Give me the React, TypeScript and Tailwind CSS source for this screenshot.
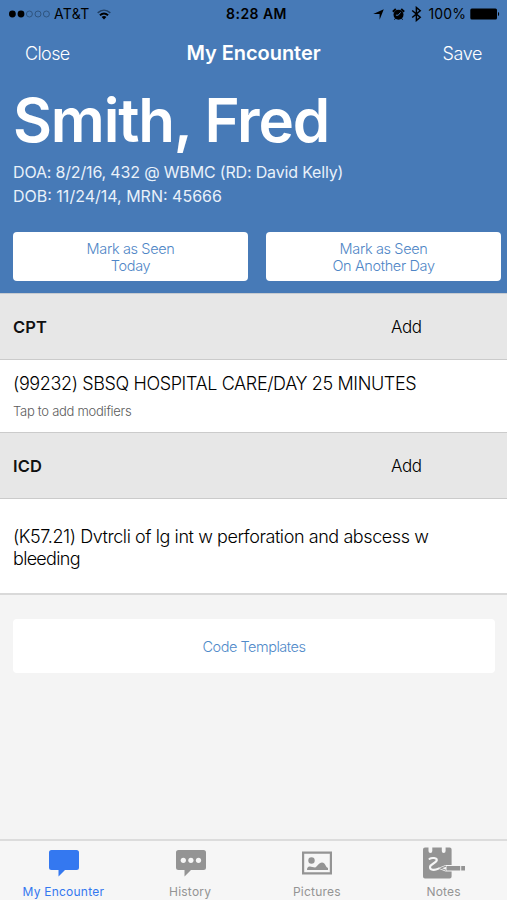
import type { ReactNode } from 'react';

const sf = "font-['Inter','Liberation_Sans',sans-serif]";
const light = "font-['Inter','Liberation_Sans',sans-serif] font-light";

function StatusBar() {
  return (
    <div className="flex h-7 items-center text-black">
      <div className="flex flex-1 items-center pl-[9px]">
        <svg width="42" height="8" viewBox="0 0 42 8" className="shrink-0">
          <circle cx="3.4" cy="4" r="3.4" />
          <circle cx="12" cy="4" r="3.4" />
          <g fill="none" stroke="#294b72" strokeWidth="0.8">
            <circle cx="20.4" cy="4" r="3" />
            <circle cx="29" cy="4" r="3" />
            <circle cx="37.4" cy="4" r="3" />
          </g>
        </svg>
        <span className="ml-[3px] text-sm tracking-[0.3px]">AT&amp;T</span>
        <svg width="14" height="11" viewBox="0 0 14 11" className="ml-[7px]">
          <path d="M.7 3.900C4.500.5 9.500.5 13.300 3.900" fill="none" stroke="#203f63" strokeWidth="1.500" />
          <path d="M2.900 6.200C5.400 4 8.600 4 11.100 6.200" fill="none" stroke="#000" strokeWidth="1.900" />
          <path d="M4.600 8C6 6.700 8 6.700 9.400 8L7 10.600z" />
        </svg>
      </div>
      <span className="pl-[4px] text-sm font-semibold tracking-[0.45px]">8:28 AM</span>
      <div className="flex flex-1 items-center justify-end pr-[7px]">
        <svg width="11" height="11" viewBox="0 0 10 10">
          <path d="M9.800.2L6 9.800V4.600H.200z" />
        </svg>
        <svg width="13" height="13" viewBox="0 0 13 13" className="ml-[8px]">
          <path d="M.8 3.700L3.800 1M9.200 1L12.200 3.700" stroke="#000" strokeWidth="1.900" />
          <path d="M3.200 10.500L2.500 11.700M9.800 10.500L10.500 11.700" stroke="#000" strokeWidth="1" />
          <circle cx="6.500" cy="6.800" r="5" />
          <path d="M6.200 7.200L8.600 4.400M3.900 7.200H6.300" stroke="#477ab7" strokeWidth="1" />
        </svg>
        <svg width="11" height="16" viewBox="0 0 11 16" className="ml-[6px]">
          <path d="M1.200 4.500L9.200 11.300L5.400 14.500V1.500L9.200 4.700L1.200 11.500" fill="none" stroke="#000" strokeWidth="1.500" />
        </svg>
        <span className="ml-[7px] text-sm tracking-[0.1px]">100%</span>
        <svg width="30" height="12" viewBox="0 0 30 12" className="ml-[4px]">
          <rect x=".3" y=".5" width="26.700" height="11" rx="1.500" />
          <path d="M28 4c1.500.3 1.500 3.700 0 4z" />
        </svg>
      </div>
    </div>
  );
}

function SeenButton({ children }: { children: ReactNode }) {
  return (
    <button className={`${light} h-[49px] w-[235px] rounded-[4px] bg-white pt-px text-[14.5px] leading-[17.500px] tracking-[-0.36px] text-[#4f86c6]`}>
      {children}
    </button>
  );
}

function SectionHeader({ title }: { title: string }) {
  return (
    <div className="flex h-[66px] items-center border-b border-[#cbcbcb] bg-[#e7e7e7] pl-[13px] pt-[2px]">
      <h2 className={`${sf} w-[378px] text-[16.5px] font-semibold tracking-[0.1px] text-[#111]`}>{title}</h2>
      <button className={`${light} text-[17px] tracking-[-0.4px] text-black`}>Add</button>
    </div>
  );
}

function Tab({ label, active, children }: { label: string; active?: boolean; children: ReactNode }) {
  return (
    <div className={`flex flex-1 flex-col items-center ${active ? 'text-[#3478f0]' : 'text-[#949494]'}`}>
      <div className="flex h-[44px] items-center">{children}</div>
      <span className="whitespace-nowrap text-[12px] leading-4 tracking-[0.22px]">{label}</span>
    </div>
  );
}

export default function App() {
  return (
    <main className={`${sf} flex h-[900px] w-[507px] flex-col overflow-hidden bg-[#f4f4f4]`}>
      <header className="h-[293px] shrink-0 bg-[#477ab7] text-white">
        <StatusBar />
        <nav className="flex h-[50px] items-center justify-between px-[25px]">
          <button className={`${light} w-[60px] text-left text-[18px] tracking-[-0.6px] text-white`}>Close</button>
          <h1 className="text-[20px] font-semibold tracking-[-0.05px]">My Encounter</h1>
          <button className={`${light} w-[60px] text-right text-[18px] tracking-[-0.4px] text-white`}>Save</button>
        </nav>
        <div className="pl-[13px]">
          <div className="h-[82px] whitespace-nowrap text-[60px] font-semibold leading-[85px] tracking-[-1.2px]">Smith, Fred</div>
          <div className="text-[16px] leading-6 text-[#e9f1fa]">
            <p className="whitespace-nowrap tracking-[-0.17px]">DOA: 8/2/16, 432 @ WBMC (RD: David Kelly)</p>
            <p className="whitespace-nowrap">DOB: 11/24/14, MRN: 45666</p>
          </div>
          <div className="mt-6 flex gap-[18px]">
            <SeenButton>Mark as Seen<br />Today</SeenButton>
            <SeenButton>Mark as Seen<br />On Another Day</SeenButton>
          </div>
        </div>
      </header>
      <div className="h-px shrink-0 bg-[#c7cbd0]" />
      <SectionHeader title="CPT" />
      <div className={`${light} h-[73px] border-b border-[#cbcbcb] bg-white pl-[13px] pt-3`}>
        <p className="whitespace-nowrap text-[18px] leading-6 tracking-[-0.38px] text-black">(99232) SBSQ HOSPITAL CARE/DAY 25 MINUTES</p>
        <p className="mt-[7px] text-[13px] leading-4 tracking-[-0.27px] text-[#5c5c5c]">Tap to add modifiers</p>
      </div>
      <SectionHeader title="ICD" />
      <div className={`${light} h-24 border-b-2 border-[#d9d9d9] bg-white pl-[13px] pt-[27px] text-[18px] leading-[22px] tracking-[-0.42px] text-black`}>
        <p className="whitespace-nowrap">(K57.21) Dvtrcli of lg int w perforation and abscess w<br /><span className="tracking-[-0.7px]">bleeding</span></p>
      </div>
      <div className="flex-1 pl-[13px] pt-6">
        <button className={`${light} h-[54px] w-[482px] rounded-[4px] bg-white pt-[2px] text-[14.5px] tracking-[-0.48px] text-[#4f8ac9]`}>Code Templates</button>
      </div>
      <footer className="flex h-[61px] shrink-0 border-t-2 border-[#dcdcdc] bg-[#f6f6f6]">
        <Tab label="My Encounter" active>
          <svg width="30" height="28" viewBox="0 0 30 28" fill="currentColor" className="ml-px">
            <path d="M2.500 1h25A2.500 2.500 0 0 1 30 3.500v15a2.500 2.500 0 0 1-2.500 2.500H16l-6.500 6.500V21h-7A2.500 2.500 0 0 1 0 18.500v-15A2.500 2.500 0 0 1 2.500 1z" />
          </svg>
        </Tab>
        <Tab label="History">
          <svg width="30" height="28" viewBox="0 0 30 28" fill="currentColor" className="ml-px">
            <path d="M2.500 1h25A2.500 2.500 0 0 1 30 3.500v15a2.500 2.500 0 0 1-2.500 2.500H15l-6.500 6.500V21h-6A2.500 2.500 0 0 1 0 18.500v-15A2.500 2.500 0 0 1 2.500 1z" />
            <g fill="#f6f6f6">
              <circle cx="7.300" cy="11.300" r="2.600" />
              <circle cx="14.900" cy="11.300" r="2.600" />
              <circle cx="22.500" cy="11.300" r="2.600" />
            </g>
          </svg>
        </Tab>
        <Tab label="Pictures">
          <svg width="30" height="24" viewBox="0 0 30 24" fill="currentColor">
            <path fillRule="evenodd" d="M0 .5h30v23H0zM2.200 2.700v18.600h25.600V2.700z" />
            <circle cx="9.500" cy="9.500" r="3.200" />
            <path d="M5 19c0-3 1.700-4.300 4-3.200l4 .8c2-.6 3.800-5.100 7-5.100 3.400 0 3.600 5 6 5.500V19z" />
          </svg>
        </Tab>
        <Tab label="Notes">
          <svg width="42" height="32" viewBox="0 0 42 32" fill="currentColor">
            <path d="M2 .5h3.500v3.500a1.900 1.900 0 0 0 3.800 0V.5h9.500v3.500a1.900 1.900 0 0 0 3.800 0V.5h4a2 2 0 0 1 2 2v27a2 2 0 0 1-2 2H2a2 2 0 0 1-2-2v-27a2 2 0 0 1 2-2z" />
            <path d="M6.500 11.800c2.500-1.500 7.500-1 7.300 1.400-.2 2.600-6.500 4-6.800 6.600-.3 3.200 4 4 8.500 1.800" fill="none" stroke="#f6f6f6" strokeWidth="2.100" strokeLinecap="round" />
            <path d="M14.500 21.200L22.500 18h19.500v6.500H22.500z" fill="#f6f6f6" />
            <path d="M16.300 21.200l6.700-2.600v5.200zM23.500 18.900h13.700v4.700H23.500zM38.200 18.900h3.800v4.700h-3.800z" />
            <path d="M19.200 21.200l3.800-1.500v3z" fill="#f6f6f6" />
          </svg>
        </Tab>
      </footer>
    </main>
  );
}
